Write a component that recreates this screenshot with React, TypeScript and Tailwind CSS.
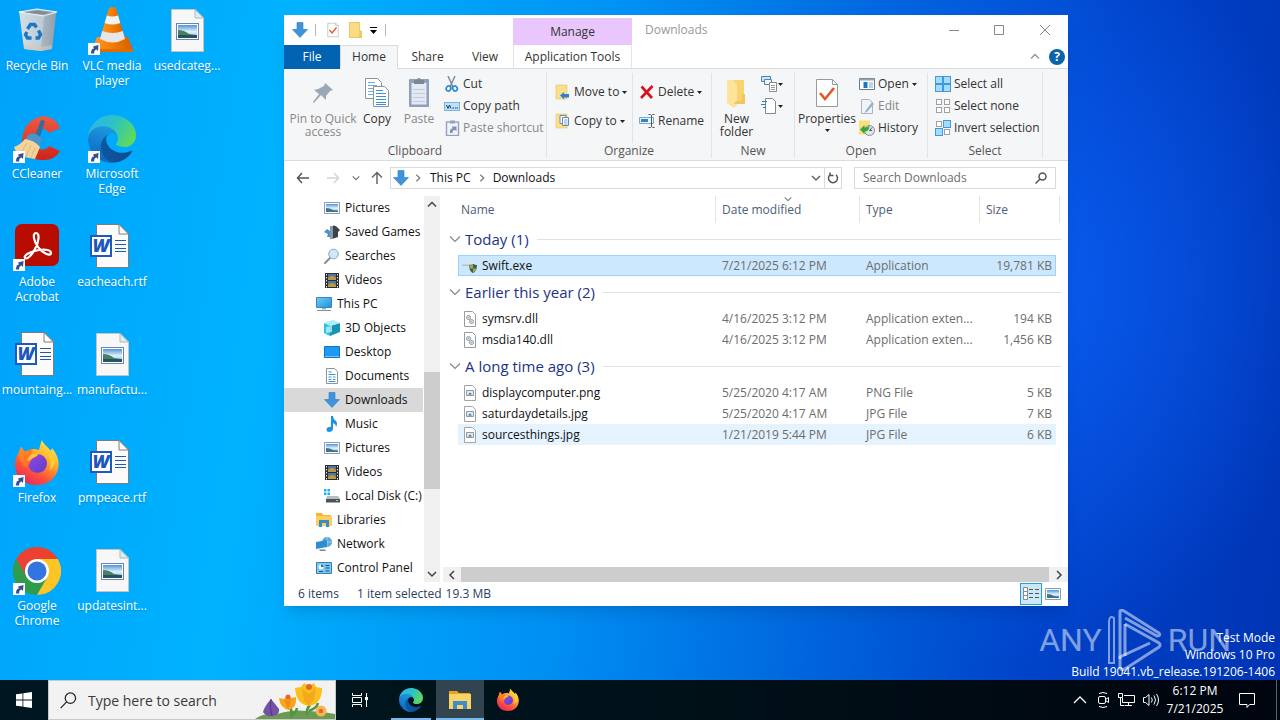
import type { ReactNode } from "react";
import { clsx } from "clsx";

type IconProps = { className?: string };

/* ---------- shared gradients ---------- */

function Gradients() {
  return (
    <svg width="0" height="0" className="absolute" aria-hidden="true">
      <defs>
        <linearGradient id="edgeDark" x1="0" y1="0" x2="1" y2="0">
          <stop offset="0" stopColor="#0c59a4" />
          <stop offset="1" stopColor="#114a8b" />
        </linearGradient>
        <linearGradient id="edgeMid" x1="0.6" y1="0" x2="0.3" y2="1">
          <stop offset="0" stopColor="#1b9de2" />
          <stop offset="0.5" stopColor="#1580d0" />
          <stop offset="1" stopColor="#0d66bc" />
        </linearGradient>
        <linearGradient id="edgeTop" x1="0" y1="0.2" x2="1" y2="0.6">
          <stop offset="0" stopColor="#2fb4ea" />
          <stop offset="0.5" stopColor="#2cc3c4" />
          <stop offset="1" stopColor="#5fdb57" />
        </linearGradient>
        <linearGradient id="foxBody" x1="0.8" y1="0" x2="0.2" y2="1">
          <stop offset="0" stopColor="#fff04a" />
          <stop offset="0.35" stopColor="#ffb02c" />
          <stop offset="0.65" stopColor="#ff5a36" />
          <stop offset="1" stopColor="#e81e62" />
        </linearGradient>
        <linearGradient id="foxHead" x1="0" y1="0" x2="1" y2="1">
          <stop offset="0" stopColor="#ff8f1e" />
          <stop offset="1" stopColor="#ff5b2c" />
        </linearGradient>
        <linearGradient id="foxGlobe" x1="0" y1="0" x2="1" y2="1">
          <stop offset="0" stopColor="#9b46e8" />
          <stop offset="1" stopColor="#5a3fc4" />
        </linearGradient>
        <linearGradient id="photo" x1="0" y1="0" x2="0" y2="1">
          <stop offset="0" stopColor="#4f93dc" />
          <stop offset="0.5" stopColor="#dceefa" />
          <stop offset="1" stopColor="#a9c8dc" />
        </linearGradient>
        <linearGradient id="cone" x1="0" y1="0" x2="1" y2="0">
          <stop offset="0" stopColor="#ff9a2e" />
          <stop offset="0.5" stopColor="#f57c00" />
          <stop offset="1" stopColor="#d35f00" />
        </linearGradient>
        <linearGradient id="bin" x1="0" y1="0" x2="1" y2="0">
          <stop offset="0" stopColor="#d3dfe7" />
          <stop offset="0.65" stopColor="#bccad4" />
          <stop offset="1" stopColor="#94a3af" />
        </linearGradient>
        <linearGradient id="ccRed" x1="0" y1="0" x2="0" y2="1">
          <stop offset="0" stopColor="#ef5a44" />
          <stop offset="1" stopColor="#cf2318" />
        </linearGradient>
        <linearGradient id="screen" x1="0" y1="0" x2="1" y2="1">
          <stop offset="0" stopColor="#6fd0f8" />
          <stop offset="1" stopColor="#1c8fdc" />
        </linearGradient>
      </defs>
    </svg>
  );
}

/* ---------- desktop and taskbar icons ---------- */

function RecycleBinIcon() {
  return (
    <svg viewBox="0 0 48 48" className="size-12">
      <path d="M6 4 43 6 39 42 28 44 11 42z" fill="url(#bin)" />
      <path d="M6 5 24 2 44 5 31 9z" fill="#9eacb6" stroke="#eef4f8" strokeWidth="1.2" />
      <path d="M12 5.500 24 3.500 38 5.500 30 7.500z" fill="#7f8d98" />
      <path d="M31 9 28 44 39 42 43.500 6z" fill="#8e9ca8" opacity=".45" />
      <path d="m11 38 17 2 11-2-.5 4L28 44l-17-2z" fill="#d9c7b4" opacity=".6" />
      <g fill="none" stroke="#1d76c2" strokeWidth="3.400">
        <path d="m14.500 22 3-4.500h4l2 3" />
        <path d="m25.500 23.500 2 4-2 3.500h-3" />
        <path d="M18.500 31h-4l-2-3.500 1.500-2.500" />
      </g>
    </svg>
  );
}

function VlcIcon() {
  return (
    <svg viewBox="0 0 48 48" className="size-12">
      <path d="M9 30h31l5 13q0 2-2 2H6q-2 0-2-2z" fill="url(#cone)" />
      <path d="M5 42h39l1 2q0 1-2 1H6q-2 0-2-1z" fill="#e06c00" />
      <path d="M21 1q3.500-2 7 0l9 31q-12 8-25 0z" fill="url(#cone)" />
      <path d="m18.900 8.500-2.200 7.500q8 3 15.600 0l-2.200-7.500q-6 2-11.200 0z" fill="#f2f2f2" />
      <path d="m14.200 24-2.200 8q13 7 25 0l-2.200-8q-10 4-20.600 0z" fill="#e6e6e6" />
    </svg>
  );
}

function CCleanerIcon() {
  return (
    <svg viewBox="0 0 48 48" className="size-12">
      <path
        d="M47 13 36 18q-4-6-10-3-5 4-5 10t5 9q6 2 10-3l11 5q-5 9-16 9-19 1-22-18Q10 4 31 1q11 1 16 12z"
        fill="url(#ccRed)"
      />
      <path d="m28 5 4 1-6 19-5-2z" fill="#2f6e9f" />
      <path d="M14 21q7-6 15 3l-2 8-14-6z" fill="#4b94c8" />
      <path d="M12 24q9 1 15 8l-5 12-16-3q-4-5-5-9 6-2 11-8z" fill="#f4d49a" />
      <path d="m14 28-6 10m10-8-5 12m9-9-4 10" stroke="#e3bd80" strokeWidth="1.200" />
    </svg>
  );
}

function AcrobatIcon() {
  return (
    <svg viewBox="0 0 48 48" className="size-12">
      <rect x="2" y="1" width="44" height="42" rx="7" fill="#b90c00" />
      <path
        d="M23 10c4 0 3 9-1 16-3 6-8 11-10 9-2-3 7-7 14-8 7-1 12 0 12 3 0 4-9 0-13-6-4-5-6-14-2-14z"
        fill="none"
        stroke="#fff"
        strokeWidth="2.200"
        strokeLinejoin="round"
      />
    </svg>
  );
}

function EdgeIcon({ className = "size-12" }: IconProps) {
  return (
    <svg viewBox="0 0 256 256" className={className}>
      <path
        fill="url(#edgeDark)"
        d="M231 190.500c-3.400 1.800-6.900 3.400-10.500 4.700a101.500 101.500 0 0 1-35.800 6.400c-47.100 0-88.200-32.400-88.200-74.200a31.500 31.500 0 0 1 16.400-27.300c-42.600 1.800-53.500 46.200-53.500 72.100 0 73.500 67.600 80.900 82.200 80.900 7.900 0 19.800-2.300 27-4.600l1.300-.4a128.300 128.300 0 0 0 66.600-52.800 4 4 0 0 0-5.500-4.800Z"
      />
      <path
        fill="url(#edgeMid)"
        d="M105.700 241.400a79.200 79.200 0 0 1-22.700-21.300 80.700 80.700 0 0 1 29.800-120c3.200-1.500 8.500-4.100 15.600-4a32.400 32.400 0 0 1 25.700 13 31.900 31.900 0 0 1 6.300 18.700c0-.2 24.500-79.600-80-79.600-43.900 0-80 41.700-80 78.200a130.200 130.200 0 0 0 12.100 56 128 128 0 0 0 156.400 67 75.500 75.500 0 0 1-62.800-8h-.4Z"
      />
      <path
        fill="url(#edgeTop)"
        d="M152.300 148.900c-.9 1-3.400 2.500-3.400 5.600 0 2.600 1.700 5.200 4.800 7.300 14.300 10 41.400 8.600 41.500 8.600 10.700 0 21.100-2.900 30.300-8.300a61.400 61.400 0 0 0 30.400-52.900c.3-22.400-8-37.300-11.300-43.900C223.500 23.900 177.700 0 128 0 58 0 1 56.200 0 126.200c.5-36.500 36.800-66 80-66 3.500 0 23.500.3 42 10a72.600 72.600 0 0 1 30.900 29.300c6.100 10.600 7.200 24.100 7.200 29.500s-2.700 13.300-7.800 19.900Z"
      />
    </svg>
  );
}

function FirefoxIcon({ className = "size-12" }: IconProps) {
  return (
    <svg viewBox="0 0 48 48" className={className}>
      <path
        d="M29 1c1 4 6 7 9 11l1-3c5 6 8 13 6 21-2 9-10 16-21 16C11 46 2 38 2 26c0-6 2-9 4-13 1-2 1-4 2-5l4 5 7-3c3 0 5 0 7 1 1-4 2-8 3-10z"
        fill="url(#foxBody)"
      />
      <path d="M34 13c4 5 5 13 2 18 3-1 5-4 6-8-1-5-4-8-8-10z" fill="#ffdc3a" opacity=".7" />
      <circle cx="24.500" cy="24.500" r="9.500" fill="url(#foxGlobe)" />
      <path
        d="M6 13c1-2 1-4 2-5l4 5c3-2 5-3 8-3-2 2-2 4-1 5h6c0 3-6 4-7 6-1 4-4 5-3 9-5-3-9-9-9-17z"
        fill="url(#foxHead)"
      />
      <path d="M19 15h6c0 3-6 3-7 6l-4 1c1-3 2-5 5-7z" fill="#ffc43c" />
    </svg>
  );
}

function ChromeIcon() {
  return (
    <svg viewBox="0 0 48 48" className="size-12">
      <path d="M24 12h20.800A24 24 0 0 0 3.200 12l10.400 18z" fill="#ea4131" />
      <path d="M13.600 30 3.200 12A24 24 0 0 0 24 48l10.400-18z" fill="#2e9c4b" />
      <path d="M24 12h20.800A24 24 0 0 1 24 48l10.400-18z" fill="#fcc424" />
      <circle cx="24" cy="24" r="12" fill="#fff" />
      <circle cx="24" cy="24" r="9.500" fill="#3474e0" />
    </svg>
  );
}

function WordFileIcon() {
  return (
    <svg viewBox="0 0 48 48" className="size-12">
      <path d="M8.500 1.500H31L40.500 11v33.500h-32z" fill="#fbfbfb" stroke="#7c7c7c" />
      <path d="M31 1.500V11h9.500z" fill="#fff" stroke="#7c7c7c" />
      <path d="M27 17.500h11M27 21.500h11M27 25.500h11M27 28.500h11" stroke="#2458ab" />
      <rect x="3" y="13" width="20" height="20" fill="#fff" stroke="#2059bd" strokeWidth="2" />
      <text
        x="13"
        y="29"
        textAnchor="middle"
        fontSize="18"
        fontWeight="800"
        fontStyle="italic"
        fontFamily="Open Sans, sans-serif"
        fill="#1d57bd"
      >
        W
      </text>
    </svg>
  );
}

function ImageFileIcon() {
  return (
    <svg viewBox="0 0 48 48" className="size-12">
      <path d="M8.500 2.500H32L40.500 11v33.500h-32z" fill="#f7f7f7" stroke="#c9c3bb" />
      <path d="M32 2.500V11h8.500z" fill="#d8f0f8" stroke="#b5b5b5" />
      <rect x="13.500" y="16.500" width="22" height="16" fill="#fff" stroke="#6c86a6" />
      <rect x="15" y="18" width="19" height="13" fill="url(#photo)" />
      <path d="M15 23q6 0 11 4l8 1v3H15z" fill="#4c7f5c" />
      <path d="M15 28h19v3H15z" fill="#27506b" />
    </svg>
  );
}

function ShortcutBadge() {
  return (
    <svg viewBox="0 0 12 12" className="absolute bottom-0 left-0 size-3">
      <rect width="12" height="12" fill="#fff" />
      <path d="M3 10.500C3 7 4 5.500 6 5.500L5 3.500l5.500-1.500-.5 6-1.500-1.500C6.500 7 6 8.500 6.200 10.500z" fill="#33508f" />
    </svg>
  );
}

/* ---------- explorer icons ---------- */

function DownArrowIcon({ className = "size-4" }: IconProps) {
  return (
    <svg viewBox="0 0 16 16" className={className}>
      <path d="M5 .5h6v7h4.500L8 15.500.5 7.500H5z" fill="#3f93da" stroke="#2b7cc2" strokeWidth=".6" />
    </svg>
  );
}

function CheckPageIcon({ className = "h-4 w-3" }: IconProps) {
  return (
    <svg viewBox="0 0 24 32" className={className}>
      <path d="M1.500 2.500h16l5 5v22h-21z" fill="#fff" stroke="#9a9a9a" />
      <path d="M17.500 2.500v5h5" fill="none" stroke="#9a9a9a" />
      <path d="m5 16 5 6 9-11" fill="none" stroke="#e0592a" strokeWidth="2.600" />
    </svg>
  );
}

function FolderIcon() {
  return (
    <svg viewBox="0 0 13 16" className="h-4 w-[13px]">
      <path d="M0 0h11v16H0z" fill="#fbdc83" />
      <path d="M11 9h2v7H9z" fill="#f3c963" />
      <path d="M.5.5h10V9h2v6.500H.5z" fill="none" stroke="#ecc766" />
    </svg>
  );
}

function Caret() {
  return (
    <svg viewBox="0 0 5 3" className="h-[3px] w-[5px] shrink-0">
      <path d="M0 0h5L2.500 3z" fill="#222" />
    </svg>
  );
}

function PinIcon() {
  return (
    <svg viewBox="0 0 24 24" className="size-6">
      <path d="m14 2 8 7-3 1-4 5v4l-5-5-7 8-1-1 6-8-5-4 4-1 6-3z" fill="#9ba7b5" />
    </svg>
  );
}

function CopyIcon() {
  return (
    <svg viewBox="0 0 32 32" className="size-8">
      <g fill="#fff" stroke="#8a939c">
        <path d="M4.500 1.500h12l4 4v16h-16z" />
        <path d="M12.500 9.500h11l4 4v16h-15z" />
      </g>
      <path d="M7 8.500h9M7 11.500h5M7 14.500h5M7 17.500h5M7 5.500h7" stroke="#74a9dd" />
      <path d="M15 13.500h7M15 16.500h10M15 19.500h10M15 22.500h10M15 25.500h10M15 27.500h10" stroke="#3b8edb" />
    </svg>
  );
}

function PasteIcon() {
  return (
    <svg viewBox="0 0 32 32" className="size-8">
      <rect x="6" y="2" width="20" height="28" rx="1" fill="#8fa0b8" />
      <path d="M8.500 6h15v21.500h-15z" fill="#e4e9f3" />
      <path d="M10 12.500h12M10 16.500h12M10 20.500h12M10 24.500h12" stroke="#c2cbdc" />
      <path d="M11 3h3q2-4 4 0h3v4H11z" fill="#7b8798" />
    </svg>
  );
}

function CutIcon() {
  return (
    <svg viewBox="0 0 16 16" className="size-4">
      <path d="M4 0 9 11M11 0 6 11" stroke="#7a8793" strokeWidth="1.400" />
      <g fill="none" stroke="#2b88d0" strokeWidth="1.700">
        <ellipse cx="4.500" cy="12.500" rx="2.200" ry="2.600" transform="rotate(30 4.500 12.500)" />
        <ellipse cx="11" cy="12.500" rx="2.200" ry="2.600" transform="rotate(-30 11 12.500)" />
      </g>
    </svg>
  );
}

function CopyPathIcon() {
  return (
    <svg viewBox="0 0 16 16" className="size-4">
      <rect x=".5" y="4.500" width="15" height="8" fill="#bfe0f7" stroke="#7bb3db" />
      <path d="m2.500 7 1.500 3.500L5.500 7 7 10.500M8.500 10h1.500M11 10h1.500M13 10h1" stroke="#12406b" fill="none" />
    </svg>
  );
}

function PasteShortcutIcon() {
  return (
    <svg viewBox="0 0 16 16" className="size-4">
      <rect x="2.500" y="2" width="12" height="13.500" fill="#f0f3f9" stroke="#95a3bd" strokeWidth="1.400" />
      <path d="M6 .5h5v3H6z" fill="#95a3bd" />
      <path d="M6 13c-.5-3 .5-4.500 2.500-4.500L8 6.500h4.500V11L11 10c-2 0-2.500 1-2.500 3z" fill="#8093b5" />
    </svg>
  );
}

function MoveToIcon() {
  return (
    <svg viewBox="0 0 16 16" className="size-4">
      <path d="M1 1h11v14H1z" fill="#fbdf8c" stroke="#e6c25f" strokeWidth=".6" />
      <path d="M5 11.500 9 8v2h5v3.500H9v2z" fill="#2f7fd0" />
    </svg>
  );
}

function CopyToIcon() {
  return (
    <svg viewBox="0 0 16 16" className="size-4">
      <path d="M1 1h11v14H1z" fill="#fbdf8c" stroke="#e6c25f" strokeWidth=".6" />
      <path d="M5 2.500h6v8H5z" fill="#fff" stroke="#6a86a8" />
      <path d="M7.500 4.500h6v8h-6z" fill="#fff" stroke="#6a86a8" />
      <path d="M9 7h3.500M9 9h3.500M9 11h3.500" stroke="#4a90d6" strokeWidth=".8" />
    </svg>
  );
}

function DeleteIcon() {
  return (
    <svg viewBox="0 0 16 16" className="size-4">
      <path d="M2.500 2.500 13 14M13.500 2 2 14" stroke="#d8121b" strokeWidth="2.600" />
    </svg>
  );
}

function RenameIcon() {
  return (
    <svg viewBox="0 0 16 16" className="size-4">
      <path d="M.5 4.500h14v6H.5z" fill="#e9f4fc" stroke="#7da9cc" />
      <path d="M2 6h7v3H2z" fill="#2e86cf" />
      <path d="M9.500 1.500h2l1 1 1-1h2M12.500 2v12M9.500 14.500h2l1-1 1 1h2" stroke="#555" fill="none" />
    </svg>
  );
}

function NewFolderIcon() {
  return (
    <svg viewBox="0 0 32 32" className="size-8">
      <path d="M9 3h14v24H9z" fill="#f9d272" />
      <path d="M6 3h6l4 5v20l-3 3-7-5z" fill="#fde49a" />
      <path d="M21 17h3v10H13l2-3h6z" fill="#f1c65e" />
    </svg>
  );
}

function NewItemIcon() {
  return (
    <svg viewBox="0 0 16 16" className="size-4">
      <path d="M.5.500h9v5h-9z" fill="#cfe5f7" stroke="#4b86b5" />
      <path d="M3.500 3.500h7v5h-7z" fill="#f4f4f4" stroke="#4b86b5" />
      <path d="M8.500 6.500h7v9h-7z" fill="#fff" stroke="#8a8a8a" />
      <path d="M10 9.500h4M10 11.500h4M10 13.500h4" stroke="#9a9a9a" />
    </svg>
  );
}

function EasyAccessIcon() {
  return (
    <svg viewBox="0 0 16 16" className="size-4">
      <path d="M4.500.500h7l3 3v12h-10z" fill="#fff" stroke="#7f8990" />
      <path d="M1 3.500h5M0 6.500h5M2 9.500h3" stroke="#2f7fc4" />
    </svg>
  );
}

function OpenIcon() {
  return (
    <svg viewBox="0 0 16 16" className="size-4">
      <path d="M.5 2.500h15v11H.5z" fill="#fff" stroke="#6d7a86" />
      <path d="M.5 2.500h15v2H.5z" fill="#8fa3b3" />
      <path d="M4.500 6h4v6h-4z" fill="#1676c9" />
      <path d="M10 7h4M10 9h4M10 11h4" stroke="#7aa7cf" />
    </svg>
  );
}

function EditIcon() {
  return (
    <svg viewBox="0 0 16 16" className="size-4">
      <path d="M2.500 1.500h8l3 3v11h-11z" fill="#f0f3f8" stroke="#aab4c2" />
      <path d="M13 4 7 12l-1.500 3 3-1.500L15 6z" fill="#9fb2cc" />
    </svg>
  );
}

function HistoryIcon() {
  return (
    <svg viewBox="0 0 16 16" className="size-4">
      <path d="M0 .5h11v14H0z" fill="#fbdf78" />
      <circle cx="10.500" cy="10.500" r="5" fill="#dfe6ea" stroke="#7e8f9c" />
      <path d="M10.500 10.500 13 7.500M10.500 10.500h2.500" stroke="#555" />
      <path d="M1 9.500 5.500 5v2.500c2 0 4-.5 5-2 0 4-2 6-5 6V14z" fill="#37a447" />
    </svg>
  );
}

/* The three selection icons only differ in which of the four tiles are filled. */
function TilesIcon({ filled }: { filled: number[] }) {
  const spots = [
    [1, 1],
    [9, 1],
    [1, 9],
    [9, 9],
  ];
  return (
    <svg viewBox="0 0 16 16" className="size-4">
      {spots.map(([x, y], i) =>
        filled.includes(i) ? (
          <rect key={i} x={x - 0.5} y={y - 0.5} width="7" height="7" fill="#a9dafb" stroke="#3c9be0" />
        ) : (
          <rect key={i} x={x + 0.5} y={y + 0.5} width="5" height="5" fill="#fff" stroke="#a0a0a0" />
        )
      )}
    </svg>
  );
}

function PictureIcon() {
  return (
    <svg viewBox="0 0 16 16" className="size-4">
      <path d="M.5 2.500h15v11H.5z" fill="#fff" stroke="#8a9cae" />
      <path d="M2 4h12v8H2z" fill="url(#photo)" />
      <path d="M2 8q4 0 7 2l5 .5V12H2z" fill="#3f7388" />
    </svg>
  );
}

function SavedGamesIcon() {
  return (
    <svg viewBox="0 0 16 16" className="size-4">
      <path d="M7 3q3-3 6 0l3 3-2 2v5l-6 2V8z" fill="#3b444d" />
      <path d="M6 2h3v13H6z" fill="#8b98a5" />
      <path d="M0 8l3-3 3 2v6H3l1-3z" fill="#3f93cf" />
    </svg>
  );
}

function SearchesIcon() {
  return (
    <svg viewBox="0 0 16 16" className="size-4">
      <path d="M1 15 6.500 9.500" stroke="#8d8d8d" strokeWidth="2" strokeLinecap="round" />
      <circle cx="9.500" cy="6" r="4.800" fill="#cfe9fa" stroke="#8fa7b8" />
    </svg>
  );
}

function VideosIcon() {
  return (
    <svg viewBox="0 0 16 16" className="size-4">
      <path d="M1 1h14v15H1z" fill="#2d2d2d" />
      <path d="M4 2h8v6H4z" fill="#5872b0" />
      <path d="M4 9h8v6H4z" fill="#5872b0" />
      <path d="M4 6q4-4 8 0v2H4zM4 13q4-4 8 0v2H4z" fill="#b59d3a" />
      <path d="M2.500 2v14M13.500 2v14" stroke="#e2e2e2" strokeDasharray="1.500 1.500" />
    </svg>
  );
}

function ThisPcIcon() {
  return (
    <svg viewBox="0 0 16 16" className="size-4">
      <path d="M.5 1.500h15v10H.5z" fill="url(#screen)" stroke="#3c86b8" />
      <path d="M6 12h4v1.500H6z" fill="#9ab3c4" />
      <path d="M1 14.500h14" stroke="#7d95a6" />
    </svg>
  );
}

function ObjectsIcon() {
  return (
    <svg viewBox="0 0 16 16" className="size-4">
      <path d="M6 6 16 3v9l-10 4z" fill="#1793b5" />
      <path d="M0 3 6 5v11l-6-3z" fill="#28c3dc" />
      <path d="M0 3 9 0l7 3-10 3z" fill="#a9eff7" />
      <path d="m2 7 6-1v6l-6 1z" fill="#d6f8fc" opacity=".7" />
    </svg>
  );
}

function DesktopIcon() {
  return (
    <svg viewBox="0 0 16 16" className="size-4">
      <path d="M.5 2.500h15v11H.5z" fill="#1b9af0" stroke="#1474bd" />
      <path d="M1 12h14v1H1z" fill="#6fc5fb" />
    </svg>
  );
}

function DocumentsIcon() {
  return (
    <svg viewBox="0 0 16 16" className="size-4">
      <path d="M2.500.5h8l3 3v12h-11z" fill="#fff" stroke="#8a949c" />
      <path d="M4.500 4h3M4.500 6.500h7M4.500 9h3M9 9h2.500M4.500 11.500h3M9 11.500h2.500M4.500 13.500h7" stroke="#3b8fd6" />
    </svg>
  );
}

function MusicIcon() {
  return (
    <svg viewBox="0 0 16 16" className="size-4">
      <path d="M7 0h2q0 3 3 5 2 2 0 6 0-3-3-4v5.500q0 3-3.500 3.500-3 0-3-2.500t4.500-2.700z" fill="#1d92e2" />
    </svg>
  );
}

function DiskIcon() {
  return (
    <svg viewBox="0 0 16 16" className="size-4">
      <path d="M0 1h2.500v2.500H0zM3.500 1H6v2.500H3.500zM0 4.500h2.500V7H0zM3.500 4.500H6V7H3.500z" fill="#1cb4e6" />
      <path d="M3 8h11l2 3v3H2v-3z" fill="#b6bcc2" />
      <path d="M2 11h14v3.500H2z" fill="#4b5258" />
      <path d="M12 12.500h2" stroke="#7ef28c" />
    </svg>
  );
}

function LibrariesIcon() {
  return (
    <svg viewBox="0 0 16 16" className="size-4">
      <path d="M0 1h6l1 2h8v11H0z" fill="#f5b52c" />
      <path d="M0 4h16v10H0z" fill="#fbcf5c" />
      <path d="M3 15V8h10v7h-3v-4H6v4z" fill="#3a8cc8" />
    </svg>
  );
}

function NetworkIcon() {
  return (
    <svg viewBox="0 0 16 16" className="size-4">
      <circle cx="11" cy="6" r="5" fill="#5aa9dc" />
      <path d="M11 1v10M6.500 6h9" stroke="#bfe1f5" strokeWidth=".7" />
      <path d="m0 6 11-2v7L0 13z" fill="#2c8fd2" />
      <path d="M3 13.500h6l1 1.500H4z" fill="#7b8790" />
    </svg>
  );
}

function ControlPanelIcon() {
  return (
    <svg viewBox="0 0 16 16" className="size-4">
      <path d="M.5 2.500h15v11H.5z" fill="#7cc8f2" stroke="#3b7fae" />
      <circle cx="5" cy="7" r="2.500" fill="#f2f8fb" />
      <path d="M5 7V4.500A2.500 2.500 0 0 1 7.500 7z" fill="#1c6cae" />
      <path d="M9.500 5.500h4M9.500 8h4M3 11.500h4M9.500 11h4" stroke="#144f80" />
    </svg>
  );
}

function ExeIcon() {
  return (
    <svg viewBox="0 0 16 16" className="size-4">
      <path d="M0 5h13v3H0z" fill="#b3c0cc" />
      <path d="M0 5h13v1.500H0z" fill="#dde4ea" />
      <path d="M7 7q3 0 4.500-1 1 1 3.500 1 0 6.500-4 8Q7 13.500 7 7z" fill="#46586a" />
      <path d="M11 6.500V10.500H7.500q-.3-1-.3-3 2 0 3.800-1zM11 10.500h3.500q-.5 2.500-3.500 4z" fill="#9ab53c" />
    </svg>
  );
}

function DllIcon() {
  return (
    <svg viewBox="0 0 16 16" className="size-4">
      <path d="M2.500.5h8l3 3v12h-11z" fill="#fff" stroke="#9a9a9a" />
      <g fill="none" stroke="#8796a3">
        <circle cx="6.500" cy="6.500" r="2" />
        <circle cx="9.500" cy="10.500" r="2" />
        <circle cx="6.500" cy="6.500" r=".5" />
        <circle cx="9.500" cy="10.500" r=".5" />
      </g>
    </svg>
  );
}

function SmallImageIcon() {
  return (
    <svg viewBox="0 0 16 16" className="size-4">
      <path d="M2.500.5h8l3 3v12h-11z" fill="#fff" stroke="#a3a3a3" />
      <path d="M4.500 5.500h7v5h-7z" fill="#dfe9f1" stroke="#8b9bab" />
      <path d="M6 9.500 8 7.500l2 2z" fill="#44687f" />
    </svg>
  );
}

function Chevron({ dir, className }: { dir: "up" | "down" | "left" | "right"; className?: string }) {
  const paths = {
    up: "M2 7.500 6 3.500l4 4",
    down: "M2 4l4 4 4-4",
    left: "M8 2 4 6l4 4",
    right: "m4 2 4 4-4 4",
  };
  return (
    <svg viewBox="0 0 12 12" className={clsx("shrink-0", className ?? "size-3")}>
      <path d={paths[dir]} fill="none" stroke="currentColor" strokeWidth="1.500" />
    </svg>
  );
}

/* ---------- desktop ---------- */

type Shortcut = { label: string; icon: ReactNode; linked?: boolean };

const shortcuts: Shortcut[] = [
  { label: "Recycle Bin", icon: <RecycleBinIcon /> },
  { label: "CCleaner", icon: <CCleanerIcon />, linked: true },
  { label: "Adobe Acrobat", icon: <AcrobatIcon />, linked: true },
  { label: "mountaing...", icon: <WordFileIcon /> },
  { label: "Firefox", icon: <FirefoxIcon />, linked: true },
  { label: "Google Chrome", icon: <ChromeIcon />, linked: true },
  { label: "VLC media player", icon: <VlcIcon />, linked: true },
  { label: "Microsoft Edge", icon: <EdgeIcon />, linked: true },
  { label: "eacheach.rtf", icon: <WordFileIcon /> },
  { label: "manufactu...", icon: <ImageFileIcon /> },
  { label: "pmpeace.rtf", icon: <WordFileIcon /> },
  { label: "updatesint...", icon: <ImageFileIcon /> },
  { label: "usedcateg...", icon: <ImageFileIcon /> },
];

function DesktopIcons() {
  return (
    <div className="grid w-max auto-cols-[74px] grid-flow-col grid-rows-[repeat(6,108px)] gap-x-px">
      {shortcuts.map((s) => (
        <button key={s.label} className="flex flex-col items-center gap-[2px] pt-[7px] text-white">
          <span className="relative">
            {s.icon}
            {s.linked && <ShortcutBadge />}
          </span>
          <span className="px-1 pt-px text-center text-[12px] leading-[15px] text-shadow-sm">{s.label}</span>
        </button>
      ))}
    </div>
  );
}

function Watermark() {
  return (
    <div className="absolute right-[49px] bottom-[9px] flex items-center gap-[6px] font-['Roboto'] text-[32px] leading-[60px] text-white/50">
      <span>ANY</span>
      <svg viewBox="0 0 54 62" className="h-[62px] w-[54px]" fill="none" stroke="currentColor" strokeWidth="3">
        <path d="M6 54V9q-5-3-5 4v41z" strokeWidth="2" />
        <path d="M12 50V3q0-3 4-1l35 22q2 3-2 3L17 9" />
        <path d="m17 15 34 19q2 2 0 4L17 60q-5 2-5-3v-9l30-14" />
        <path d="M17 15v32" />
      </svg>
      <span>RUN</span>
    </div>
  );
}

/* ---------- explorer window ---------- */

function Tab({ label, active, className }: { label: string; active?: boolean; className?: string }) {
  return (
    <button
      className={clsx(
        "h-6 border-b text-[12px]",
        active ? "border-x border-t border-x-[#dadbdc] border-t-[#dadbdc] border-b-[#f5f6f7] bg-[#f5f6f7]" : "border-b-[#dadbdc]",
        className
      )}
    >
      {label}
    </button>
  );
}

function WindowHeader() {
  return (
    <header className="flex text-[#333]">
      <div className="flex flex-col">
        <div className="flex h-[30px] items-center pl-2">
          <DownArrowIcon />
          <span className="mr-[11px] ml-[7px] h-3 w-px bg-[#b5b5b5]" />
          <CheckPageIcon />
          <span className="ml-[10px]">
            <FolderIcon />
          </span>
          <button aria-label="Customize Quick Access Toolbar" className="mx-2 flex flex-col items-center gap-[2px]">
            <span className="h-px w-[7px] bg-black" />
            <svg viewBox="0 0 7 4" className="h-1 w-[7px]">
              <path d="M0 0h7L3.500 4z" />
            </svg>
          </button>
          <span className="h-3 w-px bg-[#b5b5b5]" />
        </div>
        <nav className="flex">
          <button className="h-6 w-14 bg-[#0063b1] text-[12px] text-white">File</button>
          <Tab label="Home" active className="w-[58px]" />
          <Tab label="Share" className="w-[59px]" />
          <Tab label="View" className="w-14" />
        </nav>
      </div>
      <div className="flex w-[119px] flex-col pt-[3px]">
        <div className="flex h-[27px] items-center justify-center bg-[#e9c7fd] text-[12px]">Manage</div>
        <Tab label="Application Tools" className="border-x border-x-[#e8e0ee]" />
      </div>
      <div className="flex flex-1 flex-col border-b border-[#dadbdc]">
        <div className="flex h-[30px] items-center justify-between">
          <h1 className="pl-[13px] text-[12px] text-[#999]">Downloads</h1>
          <div className="flex h-full text-[#888]">
            <button aria-label="Minimize" className="flex w-[45px] items-center justify-center">
              <svg viewBox="0 0 10 10" className="size-[10px]" stroke="currentColor">
                <path d="M0 5.500h10" />
              </svg>
            </button>
            <button aria-label="Maximize" className="flex w-[45px] items-center justify-center">
              <svg viewBox="0 0 10 10" className="size-[10px]" fill="none" stroke="currentColor">
                <path d="M.5.5h9v9h-9z" />
              </svg>
            </button>
            <button aria-label="Close" className="flex w-[47px] items-center justify-center">
              <svg viewBox="0 0 10 10" className="size-[10px]" stroke="currentColor">
                <path d="m0 0 10 10M10 0 0 10" />
              </svg>
            </button>
          </div>
        </div>
        <div className="flex flex-1 items-center justify-end gap-2 pr-[3px]">
          <button aria-label="Collapse ribbon" className="text-[#999]">
            <Chevron dir="up" />
          </button>
          <button
            aria-label="Help"
            className="flex size-4 items-center justify-center rounded-full bg-[#0a64ad] text-[12px] font-bold text-white"
          >
            ?
          </button>
        </div>
      </div>
    </header>
  );
}

function Group({ title, className, children }: { title: string; className?: string; children: ReactNode }) {
  return (
    <section className={clsx("flex flex-col pt-1", className)}>
      <div className="flex h-[70px] border-r border-[#e2e3e4]">{children}</div>
      <h2 className="border-r border-[#e2e3e4] pt-px text-center text-[12px] leading-[14px] text-[#555]">{title}</h2>
    </section>
  );
}

type CommandProps = {
  icon: ReactNode;
  label: string;
  disabled?: boolean;
  menu?: boolean;
  className?: string;
};

function BigCommand({ icon, label, disabled, menu, className }: CommandProps) {
  return (
    <button
      disabled={disabled}
      className={clsx("flex flex-col items-center text-[12px] leading-[13px]", disabled ? "text-[#888]" : "text-[#333]", className)}
    >
      <span className="flex h-[39px] items-center justify-center">{icon}</span>
      <span>{label}</span>
      {menu && (
        <span className="pt-1">
          <Caret />
        </span>
      )}
    </button>
  );
}

function Command({ icon, label, disabled, menu, className }: CommandProps) {
  return (
    <button
      disabled={disabled}
      className={clsx(
        "flex h-[22px] items-center gap-[3px] text-[12px] whitespace-nowrap",
        disabled ? "text-[#888]" : "text-[#333]",
        className
      )}
    >
      {icon}
      {label}
      {menu && <Caret />}
    </button>
  );
}

function IconMenu({ icon, name }: { icon: ReactNode; name: string }) {
  return (
    <button aria-label={name} className="flex h-[22px] items-center gap-px">
      {icon}
      <Caret />
    </button>
  );
}

function Ribbon() {
  return (
    <div className="flex h-[92px] border-b border-[#dadbdc] bg-[#f5f6f7]">
      <Group title="Clipboard" className="w-[263px]">
        <BigCommand icon={<PinIcon />} label="Pin to Quick access" disabled className="ml-1 w-[70px]" />
        <BigCommand icon={<CopyIcon />} label="Copy" className="w-[38px]" />
        <BigCommand icon={<PasteIcon />} label="Paste" disabled className="w-[46px]" />
        <div className="flex flex-col pl-[2px]">
          <Command icon={<CutIcon />} label="Cut" />
          <Command icon={<CopyPathIcon />} label="Copy path" />
          <Command icon={<PasteShortcutIcon />} label="Paste shortcut" disabled />
        </div>
      </Group>
      <Group title="Organize" className="w-[165px]">
        <div className="flex w-[86px] flex-col gap-[7px] border-r border-[#e2e3e4] pt-2 pl-2">
          <Command icon={<MoveToIcon />} label="Move to" menu />
          <Command icon={<CopyToIcon />} label="Copy to" menu />
        </div>
        <div className="flex flex-col gap-[7px] pt-2 pl-[6px]">
          <Command icon={<DeleteIcon />} label="Delete" menu />
          <Command icon={<RenameIcon />} label="Rename" />
        </div>
      </Group>
      <Group title="New" className="w-[83px]">
        <BigCommand icon={<NewFolderIcon />} label="New folder" className="w-[49px]" />
        <div className="flex flex-col">
          <IconMenu icon={<NewItemIcon />} name="New item" />
          <IconMenu icon={<EasyAccessIcon />} name="Easy access" />
        </div>
      </Group>
      <Group title="Open" className="w-[133px]">
        <BigCommand icon={<CheckPageIcon className="h-8 w-6" />} label="Properties" menu className="w-16" />
        <div className="flex flex-col">
          <Command icon={<OpenIcon />} label="Open" menu />
          <Command icon={<EditIcon />} label="Edit" disabled />
          <Command icon={<HistoryIcon />} label="History" />
        </div>
      </Group>
      <Group title="Select" className="w-[115px]">
        <div className="flex flex-col pl-[7px]">
          <Command icon={<TilesIcon filled={[0, 1, 2, 3]} />} label="Select all" />
          <Command icon={<TilesIcon filled={[]} />} label="Select none" />
          <Command icon={<TilesIcon filled={[1, 2]} />} label="Invert selection" />
        </div>
      </Group>
    </div>
  );
}

function AddressBar() {
  return (
    <div className="flex h-[35px] items-center px-3 pb-[2px] text-[12px]">
      <button aria-label="Back" className="flex w-[30px] text-[#555]">
        <svg viewBox="0 0 14 12" className="h-3 w-[14px]" fill="none" stroke="currentColor" strokeWidth="1.500">
          <path d="M6 1 1.500 6 6 11M1.500 6H13" />
        </svg>
      </button>
      <button aria-label="Forward" className="flex w-[25px] text-[#d5d5d5]">
        <svg viewBox="0 0 14 12" className="h-3 w-[14px]" fill="none" stroke="currentColor" strokeWidth="1.500">
          <path d="m8 1 4.500 5L8 11M12.500 6H1" />
        </svg>
      </button>
      <button aria-label="Recent locations" className="flex w-5 text-[#777]">
        <Chevron dir="down" className="size-[10px]" />
      </button>
      <button aria-label="Up" className="flex w-[19px] text-[#666]">
        <svg viewBox="0 0 12 14" className="h-[14px] w-3" fill="none" stroke="currentColor" strokeWidth="1.500">
          <path d="M1 6.500 6 1.500l5 5M6 1.500V13" />
        </svg>
      </button>
      <div className="flex h-[22px] flex-1 items-center border border-[#d9d9d9] pl-[2px]">
        <DownArrowIcon />
        <Chevron dir="right" className="mx-1 size-[10px] text-[#777]" />
        <a href="#this-pc" className="px-[3px] text-[#111]">
          This PC
        </a>
        <Chevron dir="right" className="mx-[3px] size-[10px] text-[#777]" />
        <a href="#downloads" className="px-[3px] text-[#111]">
          Downloads
        </a>
        <button aria-label="Previous locations" className="ml-auto pr-[2px] text-[#666]">
          <Chevron dir="down" />
        </button>
        <button aria-label="Refresh" className="flex h-full w-[17px] items-center justify-center border-l border-[#d9d9d9]">
          <svg viewBox="0 0 12 12" className="size-3" fill="none" stroke="#555" strokeWidth="1.500">
            <path d="M3 2.800a4.500 4.500 0 1 0 6 0M3 .5v3h3.500" />
          </svg>
        </button>
      </div>
      <label className="ml-3 flex h-[22px] w-[202px] items-center border border-[#d9d9d9] px-2">
        <input
          type="text"
          aria-label="Search Downloads"
          placeholder="Search Downloads"
          className="min-w-0 flex-1 outline-none placeholder:text-[#6d6d6d]"
        />
        <svg viewBox="0 0 12 12" className="size-3" fill="none" stroke="#555" strokeWidth="1.500">
          <circle cx="7.500" cy="4.500" r="3.500" />
          <path d="M5 7 .5 11.500" />
        </svg>
      </label>
    </div>
  );
}

type TreeItem = { label: string; icon: ReactNode; top?: boolean; active?: boolean };

const tree: TreeItem[] = [
  { label: "Pictures", icon: <PictureIcon /> },
  { label: "Saved Games", icon: <SavedGamesIcon /> },
  { label: "Searches", icon: <SearchesIcon /> },
  { label: "Videos", icon: <VideosIcon /> },
  { label: "This PC", icon: <ThisPcIcon />, top: true },
  { label: "3D Objects", icon: <ObjectsIcon /> },
  { label: "Desktop", icon: <DesktopIcon /> },
  { label: "Documents", icon: <DocumentsIcon /> },
  { label: "Downloads", icon: <DownArrowIcon />, active: true },
  { label: "Music", icon: <MusicIcon /> },
  { label: "Pictures", icon: <PictureIcon /> },
  { label: "Videos", icon: <VideosIcon /> },
  { label: "Local Disk (C:)", icon: <DiskIcon /> },
  { label: "Libraries", icon: <LibrariesIcon />, top: true },
  { label: "Network", icon: <NetworkIcon />, top: true },
  { label: "Control Panel", icon: <ControlPanelIcon />, top: true },
];

function Sidebar() {
  return (
    <aside className="flex w-[156px] overflow-hidden">
      <ul className="w-[139px]">
        {tree.map((t, i) => (
          <li key={i}>
            <a
              href="#folder"
              className={clsx(
                "flex h-6 items-center gap-[5px] text-[12px] whitespace-nowrap text-[#111]",
                t.top ? "pl-8" : "pl-10",
                t.active && "bg-[#d9d9d9]"
              )}
            >
              {t.icon}
              {t.label}
            </a>
          </li>
        ))}
      </ul>
      <div className="ml-px flex w-4 flex-col items-center bg-[#f0f0f0] text-[#444]">
        <button aria-label="Scroll up" className="flex h-[17px] items-center">
          <Chevron dir="up" />
        </button>
        <div className="mt-[159px] h-[117px] w-full bg-[#cdcdcd]" />
        <button aria-label="Scroll down" className="mt-auto flex h-[17px] items-center">
          <Chevron dir="down" />
        </button>
      </div>
    </aside>
  );
}

type FileRow = { name: string; date: string; type: string; size: string; icon: ReactNode; state?: "selected" | "hover" };

const groups: { title: string; files: FileRow[] }[] = [
  {
    title: "Today (1)",
    files: [
      { name: "Swift.exe", date: "7/21/2025 6:12 PM", type: "Application", size: "19,781 KB", icon: <ExeIcon />, state: "selected" },
    ],
  },
  {
    title: "Earlier this year (2)",
    files: [
      { name: "symsrv.dll", date: "4/16/2025 3:12 PM", type: "Application exten...", size: "194 KB", icon: <DllIcon /> },
      { name: "msdia140.dll", date: "4/16/2025 3:12 PM", type: "Application exten...", size: "1,456 KB", icon: <DllIcon /> },
    ],
  },
  {
    title: "A long time ago (3)",
    files: [
      { name: "displaycomputer.png", date: "5/25/2020 4:17 AM", type: "PNG File", size: "5 KB", icon: <SmallImageIcon /> },
      { name: "saturdaydetails.jpg", date: "5/25/2020 4:17 AM", type: "JPG File", size: "7 KB", icon: <SmallImageIcon /> },
      { name: "sourcesthings.jpg", date: "1/21/2019 5:44 PM", type: "JPG File", size: "6 KB", icon: <SmallImageIcon />, state: "hover" },
    ],
  },
];

function FileTable() {
  return (
    <table className="w-full table-fixed border-separate border-spacing-0 text-left text-[12px]">
      <colgroup>
        <col />
        <col className="w-[144px]" />
        <col className="w-[120px]" />
        <col className="w-[76px]" />
      </colgroup>
      <thead className="text-[#4c607a]">
        <tr className="h-[27px]">
          <th className="border-r border-[#e5e5e5] p-0 pl-[3px] font-normal">Name</th>
          <th className="relative border-r border-[#e5e5e5] p-0 pl-[6px] font-normal">
            Date modified
            <Chevron dir="down" className="absolute -top-[2px] left-[67px] size-[10px] text-[#888]" />
          </th>
          <th className="border-r border-[#e5e5e5] p-0 pl-[6px] font-normal">Type</th>
          <th className="p-0 font-normal">
            <div className="-mr-1 border-r border-[#e5e5e5] pl-[6px] leading-[27px]">Size</div>
          </th>
        </tr>
      </thead>
      {groups.map((g) => (
        <tbody key={g.title}>
          <tr className="h-8">
            <th colSpan={4} className="p-0 font-normal">
              <button className="-mr-[5px] -ml-[9px] flex w-[calc(100%+14px)] items-center text-[15px] leading-5 text-[#1e3287]">
                <svg viewBox="0 0 12 12" className="mr-1 size-3 shrink-0" fill="none" stroke="#888" strokeWidth="1.200">
                  <path d="m1 3.500 5 5 5-5" />
                </svg>
                {g.title}
                <span className="ml-2 h-px flex-1 bg-[#e2e2e2]" />
              </button>
            </th>
          </tr>
          {g.files.map((f) => (
            <tr
              key={f.name}
              className={clsx(
                "h-[21px] text-[#6d6d6d]",
                f.state === "selected" && "bg-[#cce8ff] outline -outline-offset-1 outline-[#99d1ff]",
                f.state === "hover" && "bg-[#e5f3ff]"
              )}
            >
              <td className="p-0 text-[#111]">
                <span className="flex items-center gap-1 pl-1">
                  {f.icon}
                  {f.name}
                </span>
              </td>
              <td className="p-0 pl-[6px]">{f.date}</td>
              <td className="p-0 pl-[6px] whitespace-nowrap">{f.type}</td>
              <td className="p-0 pr-1 text-right whitespace-nowrap">{f.size}</td>
            </tr>
          ))}
        </tbody>
      ))}
    </table>
  );
}

function StatusBar() {
  return (
    <footer className="flex h-6 items-center pr-[7px] pl-[14px] text-[12px] text-[#2b405e]">
      <span className="w-[59px]">6 items</span>
      <span className="pr-1">1 item selected</span>
      <span>19.3 MB</span>
      <div className="ml-auto flex items-center gap-[3px]">
        <button
          aria-label="Details view"
          className="flex h-[22px] w-[22px] items-center justify-center border border-[#26a0da] bg-[#cbe8f6]"
        >
          <svg viewBox="0 0 16 14" className="h-[14px] w-4 shrink-0" fill="none">
            <path d="M.5.5h4v4h-4zM.5 4.500h4v4h-4zM.5 8.500h4v4h-4z" fill="#fff" stroke="#8a8a8a" />
            <path d="M6 2.500h4M12 2.500h4M6 6.500h4M12 6.500h4M6 10.500h4M12 10.500h4" stroke="#555" />
          </svg>
        </button>
        <button aria-label="Large icons view">
          <PictureIcon />
        </button>
      </div>
    </footer>
  );
}

function ExplorerWindow() {
  return (
    <main className="absolute top-[15px] right-[212px] bottom-[74px] left-[284px] flex flex-col bg-white shadow-lg">
      <WindowHeader />
      <Ribbon />
      <AddressBar />
      <div className="flex min-h-0 flex-1">
        <Sidebar />
        <div className="flex min-w-0 flex-1 flex-col">
          <div className="flex-1 pr-3 pl-[18px]">
            <FileTable />
          </div>
          <div className="ml-[3px] flex h-[15px] items-center bg-[#f0f0f0] text-[#444]">
            <button aria-label="Scroll left" className="flex w-[18px] justify-center">
              <Chevron dir="left" />
            </button>
            <div className="h-full flex-1 bg-[#cdcdcd]" />
            <button aria-label="Scroll right" className="flex w-[19px] justify-center">
              <Chevron dir="right" />
            </button>
          </div>
        </div>
      </div>
      <StatusBar />
    </main>
  );
}

/* ---------- taskbar ---------- */

function FlowersIcon() {
  return (
    <svg viewBox="0 0 80 38" className="h-[38px] w-20 shrink-0">
      <path d="M0 38q8-6 22-5 16-5 30-3 14 0 28 3v5z" fill="#6d9a52" />
      <path d="M16 18q-7 8-8 13 3 5 9 4 8-1 7-7-3-4-8-10z" fill="#7450a8" />
      <path d="M16 18q-2 9 1 17" stroke="#4f3383" fill="none" />
      <path d="M36 36q2-7-2-10M52 34q-1-6 3-10M54 30q8-3 9-8M37 34q4-2 5-7" stroke="#4f9443" strokeWidth="2.500" fill="none" />
      <path d="m24 17 5 1 4-4 3 3 5-1q1 11-7 13-9-2-10-12z" fill="#f8a61c" />
      <path d="m29 18 4 10 4-11-4 3z" fill="#ef8b1a" />
      <circle cx="33" cy="16" r="2.500" fill="#e8662a" />
      <path d="m40 7 6-1 3-4 5 3 5-3 2 4 6 1q0 16-13 18-13-2-14-18z" fill="#fbbf1e" />
      <path d="m47 8 2 12 5 5 5-6 2-12-7 6z" fill="#f6a81a" />
      <circle cx="54" cy="6" r="3" fill="#e8662a" />
      <circle cx="66" cy="30" r="5.500" fill="#f5b455" />
      <circle cx="66" cy="30" r="2.200" fill="#dd6a2a" />
    </svg>
  );
}

function FileExplorerIcon() {
  return (
    <svg viewBox="0 0 24 24" className="size-6">
      <path d="M1 3h8l2 2h11v3H1z" fill="#e8a220" />
      <path d="M1 6h22v15H1z" fill="#fbd265" />
      <path d="M5 21v-8h14v8h-4v-4H9v4z" fill="#3c8fcd" />
    </svg>
  );
}

function TrayIcons() {
  return (
    <div className="flex items-center gap-[6px] text-white">
      <button aria-label="Show hidden icons">
        <svg viewBox="0 0 16 16" className="size-4" fill="none" stroke="currentColor" strokeWidth="1.300">
          <path d="m2 11 6-6 6 6" />
        </svg>
      </button>
      <button aria-label="Meet now">
        <svg viewBox="0 0 18 18" className="size-[18px]" fill="none" stroke="currentColor">
          <rect x="4.500" y="5.500" width="7" height="7" rx="1.500" />
          <path d="m11.500 8.500 3-2v5l-3-2M5 2.500q4-2 8 0M5 15.500q4 2 8 0" />
        </svg>
      </button>
      <button aria-label="Network">
        <svg viewBox="0 0 18 18" className="size-[18px]" fill="none" stroke="currentColor">
          <path d="M6 4.500h10.500v7h-12V7M10.500 11.500v3M7 14.500h7M.5 2.500h4v4h-4zM2.500 6.500v8h4" />
        </svg>
      </button>
      <button aria-label="Volume">
        <svg viewBox="0 0 18 18" className="size-[18px]" fill="none" stroke="currentColor">
          <path d="M1.500 6.500h2l3.500-3v11l-3.500-3h-2zM9.500 6.500q1.500 2.500 0 5M12 4.500q3 4.500 0 9M14.500 3q4 6 0 12" />
        </svg>
      </button>
    </div>
  );
}

function Taskbar() {
  return (
    <footer className="flex h-10 bg-linear-to-r from-[#001721] via-[#001219] to-[#00050f]">
      <button aria-label="Start" className="flex w-12 items-center justify-center">
        <svg viewBox="0 0 16 16" className="size-4" fill="#fff">
          <path d="M0 2.300 6.500 1.400v6.200H0zM7.300 1.300 16 0v7.600H7.300zM0 8.400h6.500v6.200L0 13.700zM7.300 8.400H16V16l-8.700-1.300z" />
        </svg>
      </button>
      <label className="flex w-72 items-center border border-[#c8c8c8] bg-[#f2f2f2] pl-[11px]">
        <svg viewBox="0 0 18 18" className="size-[17px] shrink-0" fill="none" stroke="#222" strokeWidth="1.300">
          <circle cx="11" cy="6.500" r="5.500" />
          <path d="M7 10.500.7 17" />
        </svg>
        <input
          type="text"
          aria-label="Type here to search"
          placeholder="Type here to search"
          className="min-w-0 flex-1 pl-[11px] text-[14px] outline-none placeholder:text-[#3a3a3a]"
        />
        <FlowersIcon />
      </label>
      <button aria-label="Task View" className="mr-[3px] flex w-12 items-center justify-center">
        <svg viewBox="0 0 18 18" className="size-[18px]" fill="none" stroke="#fff">
          <path d="M1.500 2v2.500h9V2M1.500 6.500h9v5h-9zM1.500 16v-2.500h9V16M15.500 2v14" />
          <path d="M14 6h3v3h-3z" fill="#fff" stroke="none" />
        </svg>
      </button>
      <button aria-label="Microsoft Edge" className="flex w-12 flex-col items-center justify-between pt-2">
        <EdgeIcon className="size-6" />
        <span className="h-[2px] w-10 bg-[#76b9ed]" />
      </button>
      <button aria-label="File Explorer" className="ml-px flex w-12 flex-col items-center justify-between bg-[#32444f] pt-2">
        <FileExplorerIcon />
        <span className="h-[2px] w-full bg-[#76b9ed]" />
      </button>
      <button aria-label="Firefox" className="flex w-12 items-center justify-center">
        <FirefoxIcon className="size-6" />
      </button>
      <div className="ml-auto flex items-center">
        <TrayIcons />
        <button className="w-[70px] text-center text-[12px] leading-[18px] text-white">
          6:12 PM
          <br />
          7/21/2025
        </button>
        <button aria-label="Notifications" className="flex w-[34px] justify-center">
          <svg viewBox="0 0 18 18" className="size-[18px]" fill="none" stroke="#fff">
            <path d="M1.500 2.500h15v11h-5l-2.500 3v-3H1.500z" />
          </svg>
        </button>
        <div className="ml-3 h-10 w-1 border-l border-[#56616a]" />
      </div>
    </footer>
  );
}

export default function App() {
  return (
    <div className="flex h-screen flex-col overflow-hidden bg-[#0050d0] font-['Open_Sans','Noto_Sans',sans-serif]">
      <Gradients />
      <div className="relative flex-1 bg-[radial-gradient(ellipse_24%_55%_at_80%_42%,#0a5cf0_0%,transparent_100%),linear-gradient(98deg,#00a2fa_0%,#00b2ff_22%,#0090f4_46%,#0064dc_66%,#0042c8_82%,#0034b4_100%)]">
        <DesktopIcons />
        <Watermark />
        <p className="absolute right-[5px] bottom-0 text-right text-[12px] leading-[17px] text-white">
          Test Mode
          <br />
          Windows 10 Pro
          <br />
          Build 19041.vb_release.191206-1406
        </p>
        <ExplorerWindow />
      </div>
      <Taskbar />
    </div>
  );
}
